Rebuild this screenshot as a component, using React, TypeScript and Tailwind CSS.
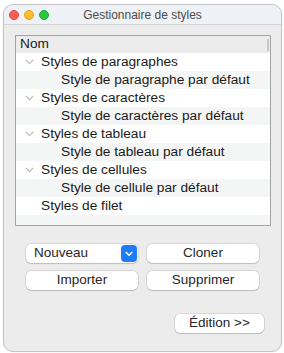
import React from "react";

const font = { fontFamily: '"Liberation Sans", Arial, sans-serif' };

function Chevron() {
  return (
    <svg width="9" height="6" viewBox="0 0 9 6" className="shrink-0">
      <path d="M1 1.2 L4.5 4.6 L8 1.2" fill="none" stroke="#b3b3b3" strokeWidth="1.1" strokeLinecap="round" strokeLinejoin="round" />
    </svg>
  );
}

const rows: { text: string; level: number; chevron: boolean }[] = [
  { text: "Styles de paragraphes", level: 1, chevron: true },
  { text: "Style de paragraphe par défaut", level: 2, chevron: false },
  { text: "Styles de caractères", level: 1, chevron: true },
  { text: "Style de caractères par défaut", level: 2, chevron: false },
  { text: "Styles de tableau", level: 1, chevron: true },
  { text: "Style de tableau par défaut", level: 2, chevron: false },
  { text: "Styles de cellules", level: 1, chevron: true },
  { text: "Style de cellule par défaut", level: 2, chevron: false },
  { text: "Styles de filet", level: 1, chevron: false },
];

function Btn({ children, className = "" }: { children: React.ReactNode; className?: string }) {
  return (
    <div
      className={
        "h-[19px] rounded-[5px] bg-white flex items-center justify-center text-[13.5px] text-[#262626] shadow-[0_0_0_0.5px_rgba(0,0,0,0.18),0_1px_1px_rgba(0,0,0,0.12)] " +
        className
      }
    >
      {children}
    </div>
  );
}

export default function App() {
  return (
    <div className="w-[284px] h-[353px] bg-white pt-[4px] pl-[3px]" style={font}>
      <div className="w-[279px] h-[348px] rounded-[10px] border border-[#c4c4c4] bg-[#ececec] overflow-hidden flex flex-col shadow-[0_0_2px_rgba(0,0,0,0.08)]">
        {/* Title bar */}
        <div className="relative h-[20px] shrink-0 bg-[#eef1f5] border-b border-[#d4d4d4] flex items-center">
          <div className="flex items-center gap-[5px] pl-[5px]">
            <div className="w-[10px] h-[10px] rounded-full bg-[#fe5f57] border-[0.5px] border-[#e2463f]" />
            <div className="w-[10px] h-[10px] rounded-full bg-[#febc2e] border-[0.5px] border-[#e1a116]" />
            <div className="w-[10px] h-[10px] rounded-full bg-[#28c840] border-[0.5px] border-[#1aab29]" />
          </div>
          <div className="absolute inset-0 flex items-center justify-center text-[12px] text-[#4c4c4c]">
            Gestionnaire de styles
          </div>
        </div>

        {/* Body */}
        <div className="flex flex-col pl-[11px] pt-[10px]">
          <div className="w-[256px] h-[191px] border border-[#a3a3a3] bg-white flex flex-col overflow-hidden">
            <div className="h-[17px] shrink-0 bg-[#ececec] flex items-center relative text-[13.7px] text-[#1a1a1a]">
              <span className="pl-[4px]">Nom</span>
              <div className="absolute right-[1px] top-[3px] w-[2px] h-[12px] bg-[#c8c8c8]" />
            </div>
            {rows.map((r, i) => (
              <div
                key={i}
                className={
                  "h-[18px] shrink-0 flex items-center text-[13.7px] text-[#1a1a1a] " +
                  (i % 2 === 0 ? "bg-white" : "bg-[#f4f5f5]")
                }
              >
                {r.level === 1 ? (
                  <>
                    <div className="w-[25px] flex justify-center pl-[2px]">{r.chevron ? <Chevron /> : null}</div>
                    <span>{r.text}</span>
                  </>
                ) : (
                  <span className="pl-[45px]">{r.text}</span>
                )}
              </div>
            ))}
            <div className="flex-1 bg-[#f4f5f5]" />
          </div>

          {/* Buttons */}
          <div className="mt-[18px] pl-[11px] grid grid-cols-[112px_112px] gap-x-[9px] gap-y-[8px]">
            <div className="h-[19px] rounded-[5px] bg-white flex items-center justify-between text-[13.5px] text-[#262626] shadow-[0_0_0_0.5px_rgba(0,0,0,0.18),0_1px_1px_rgba(0,0,0,0.12)] pl-[8px] pr-[1px]">
              <span>Nouveau</span>
              <div className="w-[16px] h-[17px] rounded-[4px] bg-[#1f7cf5] flex items-center justify-center">
                <svg width="8" height="6" viewBox="0 0 8 6">
                  <path d="M1.2 1.5 L4 4.3 L6.8 1.5" fill="none" stroke="white" strokeWidth="1.5" strokeLinecap="round" strokeLinejoin="round" />
                </svg>
              </div>
            </div>
            <Btn>Cloner</Btn>
            <Btn>Importer</Btn>
            <Btn>Supprimer</Btn>
          </div>

          <div className="mt-[24px] pl-[160px]">
            <Btn className="w-[89px]">Édition &gt;&gt;</Btn>
          </div>
        </div>
      </div>
    </div>
  );
}
